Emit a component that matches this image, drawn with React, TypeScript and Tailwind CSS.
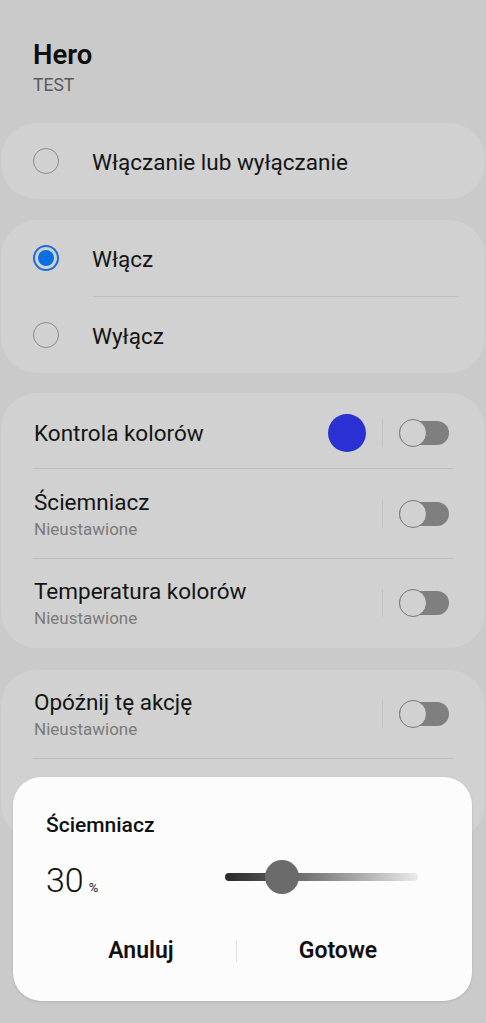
import React from "react";

const font = { fontFamily: "Roboto, 'Noto Sans', sans-serif" };

function Radio({ checked }: { checked?: boolean }) {
  if (checked) {
    return (
      <div className="w-[26px] h-[26px] rounded-full border-[2px] border-[#1c6fd8] flex items-center justify-center shrink-0">
        <div className="w-[16px] h-[16px] rounded-full bg-[#0a6fe2]" />
      </div>
    );
  }
  return <div className="w-[26px] h-[26px] rounded-full border-[1.5px] border-[#8a8a8a] shrink-0" />;
}

function Toggle() {
  return (
    <div className="flex items-center shrink-0">
      <div className="w-px h-[28px] bg-[#c2c2c2] mr-[16px]" />
      <div className="relative w-[50px] h-[24px] rounded-full bg-[#7f7f7f]">
        <div className="absolute left-0 top-[-2px] w-[28px] h-[28px] rounded-full bg-[#d1d1d1] border-[1.5px] border-[#7a7a7a]" />
      </div>
    </div>
  );
}

function SettingRow({ title, sub, extra, h }: { title: string; sub?: string; extra?: React.ReactNode; h: string }) {
  return (
    <div className={`flex items-center pl-[33px] pr-[36px] ${h}`}>
      <div className="flex-1 flex flex-col">
        <span className="text-[22.5px] leading-[28px] text-[#141414]">{title}</span>
        {sub && <span className="text-[17px] leading-[22px] text-[#7a7a7a] mt-[2px]">{sub}</span>}
      </div>
      {extra}
      <Toggle />
    </div>
  );
}

export default function App() {
  return (
    <div className="relative w-[486px] h-[1023px] bg-[#cacaca] overflow-hidden" style={font}>
      <div className="px-[33px] pt-[39px] h-[123px]">
        <div className="text-[27.5px] leading-[32px] font-semibold text-[#0d0d0d]">Hero</div>
        <div className="text-[17.5px] leading-[22px] text-[#5a5a5a] mt-[3px]">TEST</div>
      </div>

      <div className="mx-[1px] h-[76px] rounded-[36px] bg-[#d1d1d1] flex items-center pl-[32px] gap-[33px]">
        <Radio />
        <span className="text-[22.5px] leading-[28px] text-[#141414] mt-[2px]">Włączanie lub wyłączanie</span>
      </div>

      <div className="mt-[21px] mx-[1px] rounded-[36px] bg-[#d1d1d1]">
        <div className="h-[76px] flex items-center pl-[32px] gap-[33px]">
          <Radio checked />
          <span className="text-[22.5px] leading-[28px] text-[#141414] mt-[2px]">Włącz</span>
        </div>
        <div className="ml-[92px] mr-[27px] h-px bg-[#bfbfbf]" />
        <div className="h-[76px] flex items-center pl-[32px] gap-[33px]">
          <Radio />
          <span className="text-[22.5px] leading-[28px] text-[#141414] mt-[2px]">Wyłącz</span>
        </div>
      </div>

      <div className="mt-[20px] mx-[1px] rounded-[36px] bg-[#d1d1d1] pb-[1px]">
        <SettingRow
          h="h-[75px] pt-[4px]"
          title="Kontrola kolorów"
          extra={<div className="w-[38px] h-[38px] rounded-full bg-[#2b30d2] mr-[16px]" />}
        />
        <div className="mx-[32px] h-px bg-[#bfbfbf]" />
        <SettingRow h="h-[89px]" title="Ściemniacz" sub="Nieustawione" />
        <div className="mx-[32px] h-px bg-[#bfbfbf]" />
        <SettingRow h="h-[88px]" title="Temperatura kolorów" sub="Nieustawione" />
      </div>

      <div className="mt-[22px] mx-[1px] rounded-[36px] bg-[#d1d1d1] h-[170px]">
        <SettingRow h="h-[88px]" title="Opóźnij tę akcję" sub="Nieustawione" />
        <div className="mx-[32px] h-px bg-[#bfbfbf]" />
      </div>

      <div className="absolute left-[13px] top-[777px] w-[459px] h-[224px] rounded-[28px] bg-[#fcfcfc] shadow-[0_1px_3px_rgba(0,0,0,0.12)]">
        <div className="pl-[33px] pt-[35px] text-[21px] leading-[26px] font-medium text-[#111]">Ściemniacz</div>
        <div className="flex items-center pl-[33px] mt-[22px] h-[40px]">
          <div className="w-[179px] flex items-baseline">
            <span className="text-[34px] leading-[40px] font-light text-[#111]">30</span>
            <span className="text-[13px] ml-[5px] text-[#222]">%</span>
          </div>
          <div className="relative w-[193px] h-[8px] rounded-full bg-gradient-to-r from-[#2a2a2a] to-[#ebebeb] -mt-[6px]">
            <div className="absolute left-[40px] top-[-13px] w-[34px] h-[34px] rounded-full bg-[#6b6b6b]" />
          </div>
        </div>
        <div className="flex items-center px-[33px] mt-[34px] h-[34px]">
          <div className="w-[190px] text-center text-[23px] font-semibold text-[#111]">Anuluj</div>
          <div className="w-px h-[22px] bg-[#e2e2e2]" />
          <div className="flex-1 text-center text-[23px] font-semibold text-[#111]">Gotowe</div>
        </div>
      </div>
    </div>
  );
}
